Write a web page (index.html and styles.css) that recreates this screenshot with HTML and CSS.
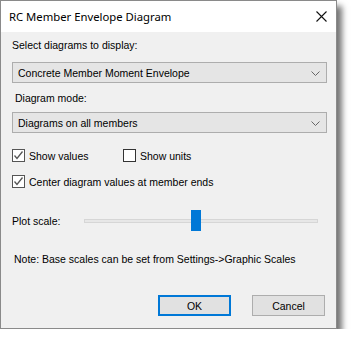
FILE: index.html
```html
<!DOCTYPE html>
<html lang="en">
<head>
    <meta charset="UTF-8">
    <title>RC Member Envelope Diagram</title>
    <link rel="stylesheet" href="styles.css">
</head>
<body>
    <div class="window">
        <div class="titlebar">
            <span class="title">RC Member Envelope Diagram</span>
            <svg class="close" width="11" height="11" viewBox="0 0 11 11">
                <path d="M0.5 0.5 L10.5 10.5 M10.5 0.5 L0.5 10.5" stroke="#111" stroke-width="1.1" fill="none"/>
            </svg>
        </div>
        <div class="content">
            <div class="label">Select diagrams to display:</div>
            <div class="combo">
                <span>Concrete Member Moment Envelope</span>
                <svg class="chevron" width="9" height="5" viewBox="0 0 9 5"><path d="M0.5 0.5 L4.5 4.5 L8.5 0.5" stroke="#666" fill="none"/></svg>
            </div>
            <div class="label label-mode">Diagram mode:</div>
            <div class="combo combo-mode">
                <span>Diagrams on all members</span>
                <svg class="chevron" width="9" height="5" viewBox="0 0 9 5"><path d="M0.5 0.5 L4.5 4.5 L8.5 0.5" stroke="#666" fill="none"/></svg>
            </div>
            <div class="checks">
                <label class="check check-first"><span class="box checked"><svg width="11" height="11" viewBox="0 0 11 11"><path d="M1.5 5.5 L4 8.5 L9.5 1.5" stroke="#555" stroke-width="1.3" fill="none"/></svg></span>Show values</label>
                <label class="check"><span class="box"></span>Show units</label>
            </div>
            <div class="checks checks-second">
                <label class="check"><span class="box checked"><svg width="11" height="11" viewBox="0 0 11 11"><path d="M1.5 5.5 L4 8.5 L9.5 1.5" stroke="#555" stroke-width="1.3" fill="none"/></svg></span>Center diagram values at member ends</label>
            </div>
            <div class="scale-row">
                <span>Plot scale:</span>
                <div class="slider">
                    <div class="track"></div>
                    <div class="thumb" style="left: 107px"></div>
                </div>
            </div>
            <div class="note">Note: Base scales can be set from Settings-&gt;Graphic Scales</div>
            <div class="buttons">
                <button class="btn btn-default">OK</button>
                <button class="btn">Cancel</button>
            </div>
        </div>
    </div>
</body>
</html>
```

FILE: styles.css
```css
body, html {
    margin: 0;
    padding: 0;
    background-color: #ffffff;
    font-family: "Liberation Sans", Arial, sans-serif;
    font-size: 10.5px;
    color: #000000;
}
.window {
    width: 335px;
    height: 327px;
    border: 1px solid #8a8a8a;
    background-color: #f0f0f0;
    box-shadow: 5px 6px 6px rgba(0, 0, 0, 0.55);
    display: flex;
    flex-direction: column;
}
.titlebar {
    height: 31px;
    background-color: #ffffff;
    display: flex;
    align-items: center;
    justify-content: space-between;
    padding: 0 9px 0 8px;
}
.title {
    font-family: "Noto Sans", "Liberation Sans", sans-serif;
    font-size: 11.3px;
    color: #000000;
    margin-top: -1px;
}
.close {
    margin-top: -1px;
}
.content {
    padding: 7px 9px 0 11px;
    display: flex;
    flex-direction: column;
}
.label {
    height: 13px;
    line-height: 13px;
}
.label-mode {
    margin-top: 9px;
    padding-left: 3px;
}
.combo {
    margin-top: 10px;
    height: 19px;
    border: 1px solid #adadad;
    background-color: #e5e5e5;
    display: flex;
    align-items: center;
    justify-content: space-between;
    padding: 0 6px 0 5px;
}
.combo-mode {
    margin-top: 7px;
}
.chevron {
    margin-top: 1px;
}
.checks {
    margin-top: 16px;
    display: flex;
    height: 13px;
}
.checks-second {
    margin-top: 13px;
}
.check {
    display: flex;
    align-items: center;
    gap: 4px;
}
.check-first {
    width: 111px;
}
.box {
    width: 11px;
    height: 11px;
    border: 1px solid #333333;
    background-color: #ffffff;
    display: flex;
}
.box.checked {
    border-color: #555555;
}
.scale-row {
    margin-top: 22px;
    display: flex;
    align-items: center;
    height: 21px;
}
.scale-row span {
    width: 72px;
}
.slider {
    position: relative;
    flex: 1;
    height: 21px;
    margin-right: 9px;
    display: flex;
    align-items: center;
}
.track {
    width: 100%;
    height: 2px;
    border: 1px solid #d6d6d6;
    background-color: #e7e7e7;
}
.thumb {
    position: absolute;
    top: 0;
    width: 10px;
    height: 21px;
    background-color: #0078d7;
}
.note {
    margin-top: 22px;
    padding-left: 2px;
    height: 13px;
    line-height: 13px;
}
.buttons {
    margin-top: 29px;
    display: flex;
    justify-content: flex-end;
    gap: 21px;
    padding-right: 2px;
}
.btn {
    width: 73px;
    height: 21px;
    border: 1px solid #adadad;
    background-color: #e1e1e1;
    font-family: "Liberation Sans", Arial, sans-serif;
    font-size: 10.5px;
    color: #000000;
    padding: 0;
}
.btn-default {
    border: 2px solid #0078d7;
}
```
